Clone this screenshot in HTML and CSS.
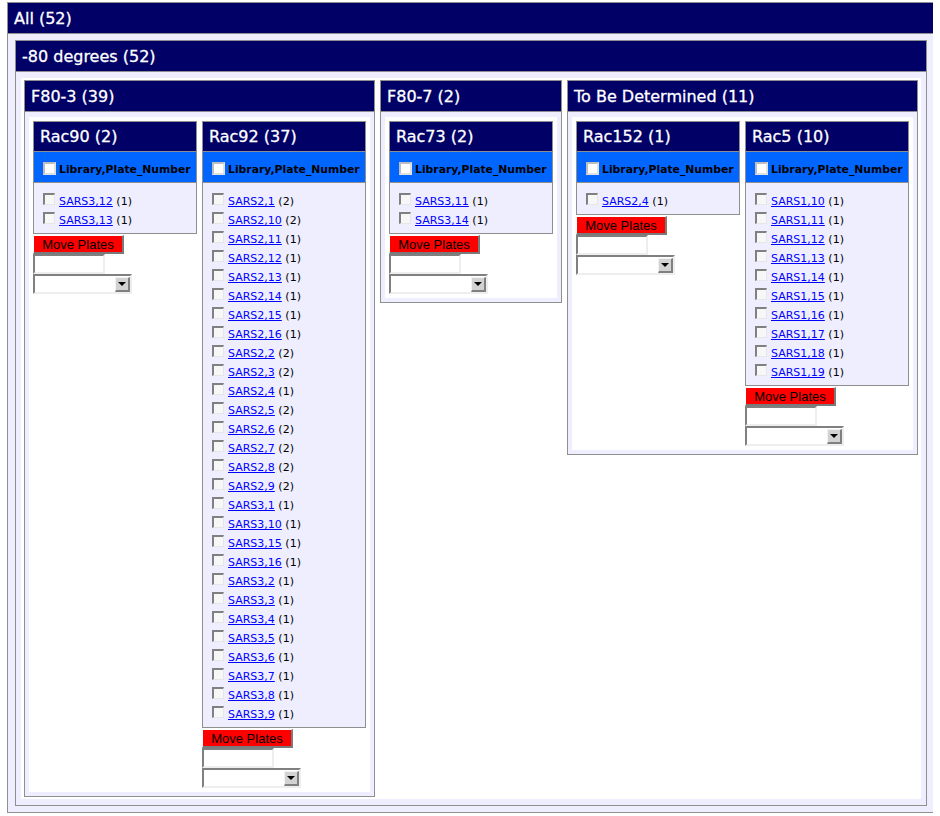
FILE: index.html
```html
<!DOCTYPE html>
<html>
<head>
<meta charset="utf-8">
<title>Plates</title>
<link rel="stylesheet" href="styles.css">
</head>
<body>
<div class="box box-all">
  <div class="title">All (52)</div>
  <div class="pad pad-all">
    <div class="box">
      <div class="title">-80 degrees (52)</div>
      <div class="pad pad-deg">
        <div class="well well-deg">

          <div class="box">
            <div class="title">F80-3 (39)</div>
            <div class="pad pad-f">
              <div class="well well-f">
                <div class="rack-col">
                  <div class="rack">
                    <div class="rack-title">Rac90 (2)</div>
                    <div class="rack-head"><input type="checkbox" class="cb cb-head"><span>Library,Plate_Number</span></div>
                    <ul class="plates">
                      <li><input type="checkbox" class="cb"><span class="lbl"><a href="#">SARS3,12</a> (1)</span></li>
                      <li><input type="checkbox" class="cb"><span class="lbl"><a href="#">SARS3,13</a> (1)</span></li>
                    </ul>
                  </div>
                  <button class="move">Move Plates</button>
                  <input type="text" class="field">
                  <div class="selwrap"><select class="sel"></select><span class="arrow"></span></div>
                </div>
                <div class="rack-col">
                  <div class="rack">
                    <div class="rack-title">Rac92 (37)</div>
                    <div class="rack-head"><input type="checkbox" class="cb cb-head"><span>Library,Plate_Number</span></div>
                    <ul class="plates">
                      <li><input type="checkbox" class="cb"><span class="lbl"><a href="#">SARS2,1</a> (2)</span></li>
                      <li><input type="checkbox" class="cb"><span class="lbl"><a href="#">SARS2,10</a> (2)</span></li>
                      <li><input type="checkbox" class="cb"><span class="lbl"><a href="#">SARS2,11</a> (1)</span></li>
                      <li><input type="checkbox" class="cb"><span class="lbl"><a href="#">SARS2,12</a> (1)</span></li>
                      <li><input type="checkbox" class="cb"><span class="lbl"><a href="#">SARS2,13</a> (1)</span></li>
                      <li><input type="checkbox" class="cb"><span class="lbl"><a href="#">SARS2,14</a> (1)</span></li>
                      <li><input type="checkbox" class="cb"><span class="lbl"><a href="#">SARS2,15</a> (1)</span></li>
                      <li><input type="checkbox" class="cb"><span class="lbl"><a href="#">SARS2,16</a> (1)</span></li>
                      <li><input type="checkbox" class="cb"><span class="lbl"><a href="#">SARS2,2</a> (2)</span></li>
                      <li><input type="checkbox" class="cb"><span class="lbl"><a href="#">SARS2,3</a> (2)</span></li>
                      <li><input type="checkbox" class="cb"><span class="lbl"><a href="#">SARS2,4</a> (1)</span></li>
                      <li><input type="checkbox" class="cb"><span class="lbl"><a href="#">SARS2,5</a> (2)</span></li>
                      <li><input type="checkbox" class="cb"><span class="lbl"><a href="#">SARS2,6</a> (2)</span></li>
                      <li><input type="checkbox" class="cb"><span class="lbl"><a href="#">SARS2,7</a> (2)</span></li>
                      <li><input type="checkbox" class="cb"><span class="lbl"><a href="#">SARS2,8</a> (2)</span></li>
                      <li><input type="checkbox" class="cb"><span class="lbl"><a href="#">SARS2,9</a> (2)</span></li>
                      <li><input type="checkbox" class="cb"><span class="lbl"><a href="#">SARS3,1</a> (1)</span></li>
                      <li><input type="checkbox" class="cb"><span class="lbl"><a href="#">SARS3,10</a> (1)</span></li>
                      <li><input type="checkbox" class="cb"><span class="lbl"><a href="#">SARS3,15</a> (1)</span></li>
                      <li><input type="checkbox" class="cb"><span class="lbl"><a href="#">SARS3,16</a> (1)</span></li>
                      <li><input type="checkbox" class="cb"><span class="lbl"><a href="#">SARS3,2</a> (1)</span></li>
                      <li><input type="checkbox" class="cb"><span class="lbl"><a href="#">SARS3,3</a> (1)</span></li>
                      <li><input type="checkbox" class="cb"><span class="lbl"><a href="#">SARS3,4</a> (1)</span></li>
                      <li><input type="checkbox" class="cb"><span class="lbl"><a href="#">SARS3,5</a> (1)</span></li>
                      <li><input type="checkbox" class="cb"><span class="lbl"><a href="#">SARS3,6</a> (1)</span></li>
                      <li><input type="checkbox" class="cb"><span class="lbl"><a href="#">SARS3,7</a> (1)</span></li>
                      <li><input type="checkbox" class="cb"><span class="lbl"><a href="#">SARS3,8</a> (1)</span></li>
                      <li><input type="checkbox" class="cb"><span class="lbl"><a href="#">SARS3,9</a> (1)</span></li>
                    </ul>
                  </div>
                  <button class="move">Move Plates</button>
                  <input type="text" class="field">
                  <div class="selwrap"><select class="sel"></select><span class="arrow"></span></div>
                </div>
              </div>
            </div>
          </div>

          <div class="box">
            <div class="title">F80-7 (2)</div>
            <div class="pad pad-f">
              <div class="well well-f">
                <div class="rack-col">
                  <div class="rack">
                    <div class="rack-title">Rac73 (2)</div>
                    <div class="rack-head"><input type="checkbox" class="cb cb-head"><span>Library,Plate_Number</span></div>
                    <ul class="plates">
                      <li><input type="checkbox" class="cb"><span class="lbl"><a href="#">SARS3,11</a> (1)</span></li>
                      <li><input type="checkbox" class="cb"><span class="lbl"><a href="#">SARS3,14</a> (1)</span></li>
                    </ul>
                  </div>
                  <button class="move">Move Plates</button>
                  <input type="text" class="field">
                  <div class="selwrap"><select class="sel"></select><span class="arrow"></span></div>
                </div>
              </div>
            </div>
          </div>

          <div class="box">
            <div class="title">To Be Determined (11)</div>
            <div class="pad pad-f">
              <div class="well well-f">
                <div class="rack-col">
                  <div class="rack">
                    <div class="rack-title">Rac152 (1)</div>
                    <div class="rack-head"><input type="checkbox" class="cb cb-head"><span>Library,Plate_Number</span></div>
                    <ul class="plates">
                      <li><input type="checkbox" class="cb"><span class="lbl"><a href="#">SARS2,4</a> (1)</span></li>
                    </ul>
                  </div>
                  <button class="move">Move Plates</button>
                  <input type="text" class="field">
                  <div class="selwrap"><select class="sel"></select><span class="arrow"></span></div>
                </div>
                <div class="rack-col">
                  <div class="rack">
                    <div class="rack-title">Rac5 (10)</div>
                    <div class="rack-head"><input type="checkbox" class="cb cb-head"><span>Library,Plate_Number</span></div>
                    <ul class="plates">
                      <li><input type="checkbox" class="cb"><span class="lbl"><a href="#">SARS1,10</a> (1)</span></li>
                      <li><input type="checkbox" class="cb"><span class="lbl"><a href="#">SARS1,11</a> (1)</span></li>
                      <li><input type="checkbox" class="cb"><span class="lbl"><a href="#">SARS1,12</a> (1)</span></li>
                      <li><input type="checkbox" class="cb"><span class="lbl"><a href="#">SARS1,13</a> (1)</span></li>
                      <li><input type="checkbox" class="cb"><span class="lbl"><a href="#">SARS1,14</a> (1)</span></li>
                      <li><input type="checkbox" class="cb"><span class="lbl"><a href="#">SARS1,15</a> (1)</span></li>
                      <li><input type="checkbox" class="cb"><span class="lbl"><a href="#">SARS1,16</a> (1)</span></li>
                      <li><input type="checkbox" class="cb"><span class="lbl"><a href="#">SARS1,17</a> (1)</span></li>
                      <li><input type="checkbox" class="cb"><span class="lbl"><a href="#">SARS1,18</a> (1)</span></li>
                      <li><input type="checkbox" class="cb"><span class="lbl"><a href="#">SARS1,19</a> (1)</span></li>
                    </ul>
                  </div>
                  <button class="move">Move Plates</button>
                  <input type="text" class="field">
                  <div class="selwrap"><select class="sel"></select><span class="arrow"></span></div>
                </div>
              </div>
            </div>
          </div>

        </div>
      </div>
    </div>
  </div>
</div>
</body>
</html>
```

FILE: styles.css
```css
html, body {
  background: #ffffff;
}
body {
  margin: 2px 7px;
  font-family: "DejaVu Sans", Verdana, sans-serif;
  color: #000;
}

.box {
  border: 1px solid #8f8f8f;
  background: #eeeeff;
  width: fit-content;
  box-sizing: border-box;
}

.title {
  background: #000066;
  color: #ffffff;
  font-size: 16px;
  height: 30px;
  line-height: 31px;
  padding-left: 6px;
  border-bottom: 1px solid #8f8f8f;
  white-space: nowrap;
  -webkit-text-stroke: 0.3px #ffffff;
}

.pad-all {
  padding: 6px 6px 6px 7px;
}
.pad-deg {
  padding: 6px 5px;
}
.pad-f {
  padding: 5px 4px 4px 4px;
}

.well {
  background: #ffffff;
  display: flex;
  align-items: flex-start;
  gap: 5px;
}
.well-deg {
  padding: 2px 3px;
}
.well-f {
  padding: 4px;
}

.rack-col {
  width: 164px;
  display: flex;
  flex-direction: column;
  align-items: flex-start;
}

.rack {
  width: 164px;
  box-sizing: border-box;
  border: 1px solid #8f8f8f;
  background: #eeeeff;
}

.rack-title {
  background: #000066;
  color: #ffffff;
  font-size: 16px;
  height: 29px;
  line-height: 30px;
  padding-left: 6px;
  border-bottom: 1px solid #8f8f8f;
  white-space: nowrap;
  -webkit-text-stroke: 0.3px #ffffff;
}

.rack-head {
  background: #0066ff;
  height: 30px;
  border-bottom: 1px solid #8f8f8f;
  display: flex;
  align-items: center;
  padding-left: 9px;
  font-weight: bold;
  font-size: 10.8px;
  white-space: nowrap;
}
.rack-head span {
  padding-top: 4px;
}

.cb {
  -webkit-appearance: none;
  appearance: none;
  margin: 0;
  width: 12px;
  height: 12px;
  box-sizing: border-box;
  border-style: solid;
  border-width: 2px 1px 1px 2px;
  border-color: #808080 #e6e6e6 #e6e6e6 #808080;
  background: #f7f7f7;
  flex: none;
}
.cb-head {
  width: 13px;
  height: 13px;
  margin-right: 3px;
  margin-top: 2px;
  border-width: 2px;
  border-color: #bdbdbd #e0e0e0 #e0e0e0 #bdbdbd;
  background: #ffffff;
}

.plates {
  list-style: none;
  margin: 0;
  padding: 7px 0 5px 9px;
}
.plates li {
  height: 19px;
  display: flex;
  align-items: flex-start;
  font-size: 11px;
  white-space: nowrap;
}
.plates li .cb {
  margin-top: 3px;
  margin-right: 4px;
}
.lbl {
  line-height: 16px;
  padding-top: 4px;
}
.lbl a {
  color: #0000ff;
  text-decoration: underline;
}

.move {
  -webkit-appearance: none;
  appearance: none;
  display: block;
  margin: 1px 0 0 0;
  padding: 0;
  width: 91px;
  height: 19px;
  box-sizing: border-box;
  background: #ff0000;
  border-style: solid;
  border-width: 1px 2px 2px 1px;
  border-color: #ffffff #7a7a7a #7a7a7a #ffffff;
  font-family: "Liberation Sans", Arial, sans-serif;
  font-size: 13px;
  color: #000;
  line-height: 15px;
  text-align: center;
}

.field {
  -webkit-appearance: none;
  appearance: none;
  display: block;
  margin: 0;
  padding: 0;
  width: 72px;
  height: 20px;
  box-sizing: border-box;
  border-style: solid;
  border-width: 2px;
  border-color: #808080 #eeeeee #eeeeee #808080;
  background: #ffffff;
}

.selwrap {
  position: relative;
  width: 99px;
  height: 20px;
}
.sel {
  -webkit-appearance: none;
  appearance: none;
  display: block;
  margin: 0;
  padding: 0;
  width: 99px;
  height: 20px;
  box-sizing: border-box;
  border-style: solid;
  border-width: 2px;
  border-color: #808080 #eeeeee #eeeeee #808080;
  background: #ffffff;
  border-radius: 0;
}
.arrow {
  position: absolute;
  right: 2px;
  bottom: 2px;
  width: 15px;
  height: 15px;
  box-sizing: border-box;
  background: #d2d2d2;
  border-style: solid;
  border-width: 1px 2px 2px 1px;
  border-color: #f2f2f2 #808080 #808080 #f2f2f2;
  display: flex;
  align-items: center;
  justify-content: center;
}
.arrow::after {
  content: "";
  display: block;
  width: 0;
  height: 0;
  border-left: 4px solid transparent;
  border-right: 4px solid transparent;
  border-top: 4px solid #000000;
}
```
